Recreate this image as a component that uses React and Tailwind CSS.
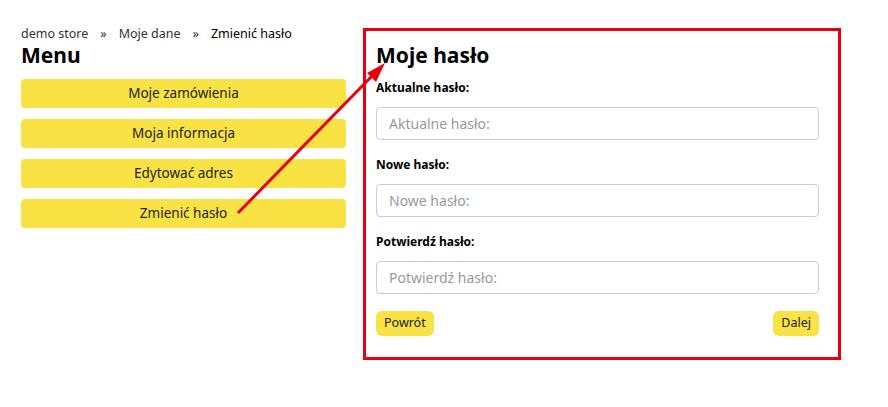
import React from "react";

const font = { fontFamily: '"Noto Sans", "Open Sans", sans-serif' };

function Field({ label }) {
  return (
    <div className="flex flex-col">
      <label className="text-[12px] font-bold text-black leading-[16px] mb-[11px]">{label}</label>
      <input
        placeholder={label}
        className="h-[33px] w-full rounded-[4px] border border-[#cccccc] px-[12px] text-[14px] placeholder:text-[#999999] outline-none"
        style={font}
      />
    </div>
  );
}

export default function App() {
  const menu = ["Moje zamówienia", "Moja informacja", "Edytować adres", "Zmienić hasło"];
  return (
    <div className="relative w-[888px] h-[407px] bg-white text-[#222]" style={font}>
      <div className="flex pl-[21px] pt-[26px] gap-[17px]">
        <div className="w-[325px] flex flex-col">
          <div className="text-[12.5px] leading-[16px] text-[#333] flex gap-[12px]">
            <span>demo store</span>
            <span>»</span>
            <span>Moje dane</span>
            <span>»</span>
            <span className="text-black">Zmienić hasło</span>
          </div>
          <h1 className="text-[21px] font-bold leading-[24px] text-black mt-[1px]">Menu</h1>
          <div className="flex flex-col gap-[11px] mt-[12px]">
            {menu.map((m) => (
              <button
                key={m}
                className="h-[29px] w-full rounded-[4px] bg-[#f8e244] text-[13.5px] text-[#222] text-center"
                style={font}
              >
                {m}
              </button>
            ))}
          </div>
        </div>
        <div className="mt-[2px] w-[478px] h-[332px] border-[3px] border-[#e8000b] px-[10px] pt-[12px]">
          <h2 className="text-[21px] font-bold leading-[24px] text-black">Moje hasło</h2>
          <div className="flex flex-col gap-[17px] mt-[13px] w-[443px]">
            <Field label="Aktualne hasło:" />
            <Field label="Nowe hasło:" />
            <Field label="Potwierdź hasło:" />
          </div>
          <div className="flex justify-between w-[443px] mt-[17px]">
            <button className="h-[25px] px-[8px] rounded-[6px] bg-[#f8e244] text-[12.5px] text-[#222]" style={font}>Powrót</button>
            <button className="h-[25px] px-[8px] rounded-[6px] bg-[#f8e244] text-[12.5px] text-[#222]" style={font}>Dalej</button>
          </div>
        </div>
      </div>
      <svg className="absolute left-0 top-0 pointer-events-none" width="888" height="407">
        <line x1="238" y1="213" x2="372" y2="76" stroke="#e8000b" strokeWidth="3" />
        <polygon points="385,63 367,73 376,82" fill="#e8000b" />
      </svg>
    </div>
  );
}
